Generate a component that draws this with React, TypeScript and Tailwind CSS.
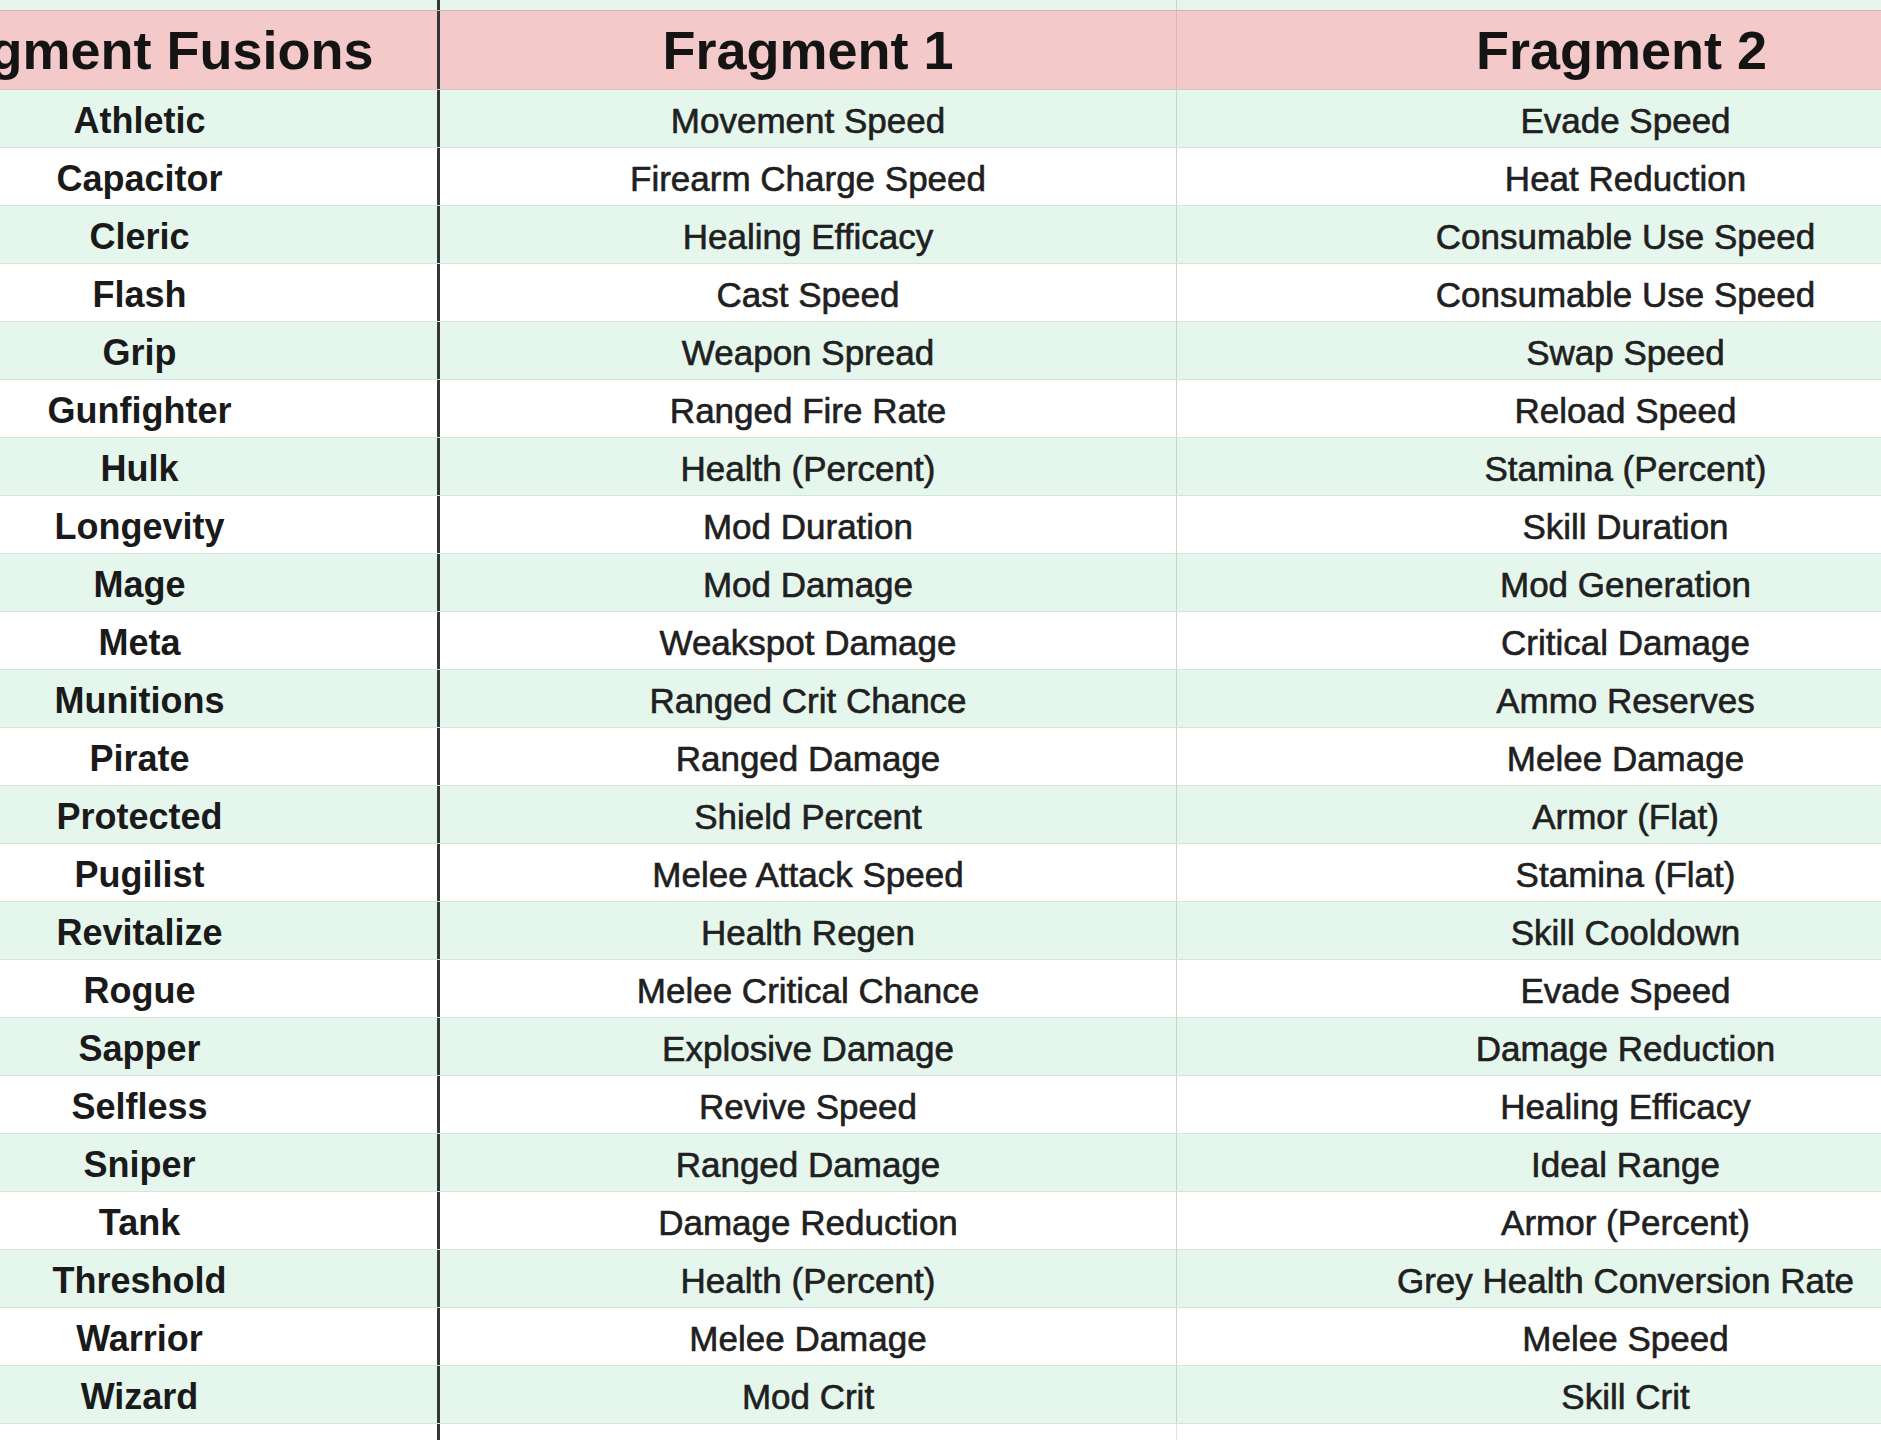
import React from "react";

const rows: [string, string, string][] = [
  ["Athletic", "Movement Speed", "Evade Speed"],
  ["Capacitor", "Firearm Charge Speed", "Heat Reduction"],
  ["Cleric", "Healing Efficacy", "Consumable Use Speed"],
  ["Flash", "Cast Speed", "Consumable Use Speed"],
  ["Grip", "Weapon Spread", "Swap Speed"],
  ["Gunfighter", "Ranged Fire Rate", "Reload Speed"],
  ["Hulk", "Health (Percent)", "Stamina (Percent)"],
  ["Longevity", "Mod Duration", "Skill Duration"],
  ["Mage", "Mod Damage", "Mod Generation"],
  ["Meta", "Weakspot Damage", "Critical Damage"],
  ["Munitions", "Ranged Crit Chance", "Ammo Reserves"],
  ["Pirate", "Ranged Damage", "Melee Damage"],
  ["Protected", "Shield Percent", "Armor (Flat)"],
  ["Pugilist", "Melee Attack Speed", "Stamina (Flat)"],
  ["Revitalize", "Health Regen", "Skill Cooldown"],
  ["Rogue", "Melee Critical Chance", "Evade Speed"],
  ["Sapper", "Explosive Damage", "Damage Reduction"],
  ["Selfless", "Revive Speed", "Healing Efficacy"],
  ["Sniper", "Ranged Damage", "Ideal Range"],
  ["Tank", "Damage Reduction", "Armor (Percent)"],
  ["Threshold", "Health (Percent)", "Grey Health Conversion Rate"],
  ["Warrior", "Melee Damage", "Melee Speed"],
  ["Wizard", "Mod Crit", "Skill Crit"],
];

const font = { fontFamily: '"Liberation Sans", Arial, sans-serif' };

export default function App() {
  return (
    <div
      className="w-[1881px] h-[1440px] overflow-hidden bg-white text-[#1c1c1c]"
      style={font}
    >
      <div className="flex flex-col w-[2300px] -ml-[158px]">
        {/* top strip (end of previous row) */}
        <div className="flex h-[10px] bg-[#e5f6ed]">
          <div className="w-[598px] border-r-[3px] border-[#363636]" />
          <div className="w-[737px] border-r border-[#c6d6ce]" />
          <div className="w-[897px]" />
        </div>
        {/* header */}
        <div className="flex h-[80px] bg-[#f4c9ca] border-t border-[#d9b0b1] border-b border-b-[#d7c6c4]">
          <div className="w-[598px] flex items-center justify-center border-r-[3px] border-[#363636] text-[54px] font-bold text-[#141414]">
            Fragment Fusions
          </div>
          <div className="w-[737px] flex items-center justify-center border-r border-[#dcb6b7] text-[54px] font-bold text-[#141414]">
            Fragment 1
          </div>
          <div className="w-[897px] flex items-center justify-center text-[54px] font-bold text-[#141414] pr-[8px]">
            Fragment 2
          </div>
        </div>
        {rows.map(([a, b, c], i) => (
          <div
            key={a}
            className={
              "flex h-[58px] border-b border-[#d9e3de] " +
              (i % 2 === 0 ? "bg-[#e5f6ed]" : "bg-white")
            }
          >
            <div className="w-[598px] flex items-center justify-center pt-[5px] border-r-[3px] border-[#363636] text-[36px] font-bold text-[#1a1a1a]">
              {a}
            </div>
            <div className="w-[737px] flex items-center justify-center pt-[5px] border-r border-[#c6d6ce] text-[35px] text-[#202020] [-webkit-text-stroke:0.6px_#202020]">
              {b}
            </div>
            <div className="w-[897px] flex items-center justify-center pt-[5px] text-[35px] text-[#202020] [-webkit-text-stroke:0.6px_#202020]">
              {c}
            </div>
          </div>
        ))}
        {/* bottom strip */}
        <div className="flex h-[40px] bg-white">
          <div className="w-[598px] border-r-[3px] border-[#363636]" />
          <div className="w-[737px] border-r border-[#dfe6e2]" />
          <div className="w-[897px]" />
        </div>
      </div>
    </div>
  );
}
